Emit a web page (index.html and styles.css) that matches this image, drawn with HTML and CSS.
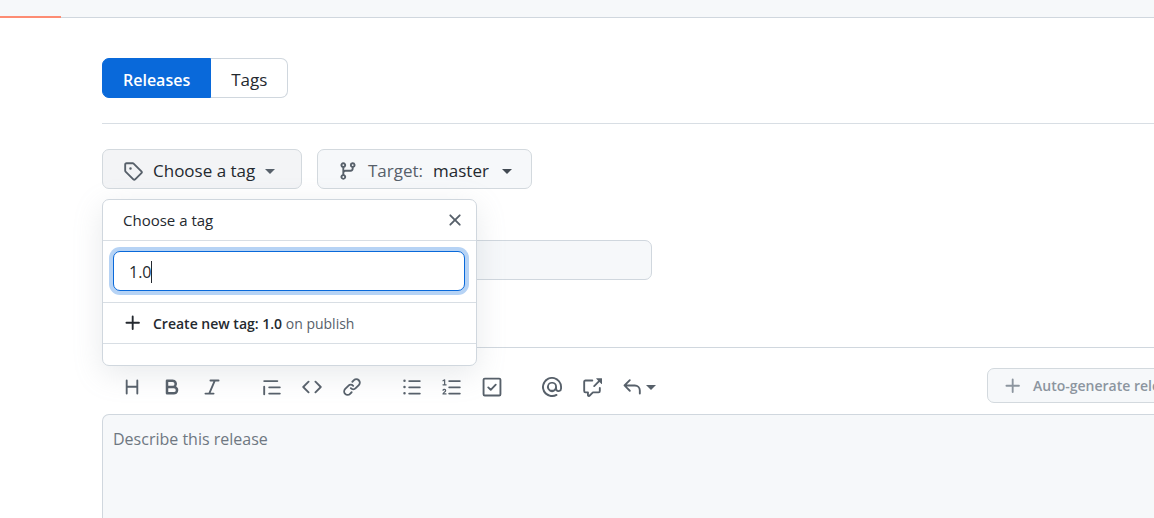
FILE: index.html
```html
<!DOCTYPE html>
<html lang="en">
<head>
<meta charset="utf-8">
<meta name="viewport" content="width=device-width, initial-scale=1">
<title>New release</title>
<link rel="stylesheet" href="styles.css">
</head>
<body>
<header class="topbar"><span class="topbar-active"></span></header>
<main class="page">
  <nav class="tabs" aria-label="Releases and tags">
    <a class="tab tab-selected" href="#releases" aria-current="page">Releases</a>
    <a class="tab" href="#tags">Tags</a>
  </nav>
  <form class="release">
    <div class="pickers">
      <div class="picker">
        <button class="btn btn-open" type="button" aria-expanded="true">
          <svg class="icon" viewBox="0 0 16 16"><path d="M1 7.775V2.75C1 1.784 1.784 1 2.75 1h5.025c.464 0 .91.184 1.238.513l6.25 6.25a1.75 1.75 0 0 1 0 2.474l-5.026 5.026a1.75 1.75 0 0 1-2.474 0l-6.25-6.25A1.752 1.752 0 0 1 1 7.775Zm1.5 0c0 .066.026.13.073.177l6.25 6.25a.25.25 0 0 0 .354 0l5.025-5.025a.25.25 0 0 0 0-.354l-6.25-6.25a.25.25 0 0 0-.177-.073H2.75a.25.25 0 0 0-.25.25ZM6 5a1 1 0 1 1 0 2 1 1 0 0 1 0-2Z"/></svg>
          <span>Choose a tag</span><span class="caret"></span>
        </button>
        <section class="menu" aria-label="Choose a tag">
          <div class="menu-head">
            <span>Choose a tag</span>
            <button class="close" type="button" aria-label="Close"><svg class="icon" viewBox="0 0 16 16"><path d="M3.72 3.72a.75.75 0 0 1 1.06 0L8 6.94l3.22-3.22a.749.749 0 0 1 1.275.326.749.749 0 0 1-.215.734L9.06 8l3.22 3.22a.749.749 0 0 1-.326 1.275.749.749 0 0 1-.734-.215L8 9.06l-3.22 3.22a.751.751 0 0 1-1.042-.018.751.751 0 0 1-.018-1.042L6.94 8 3.72 4.78a.75.75 0 0 1 0-1.06Z"/></svg></button>
          </div>
          <div class="menu-search">
            <input class="search" type="text" value="1.0" aria-label="Find or create a new tag">
            <span class="cursor"></span>
          </div>
          <button class="menu-item" type="button">
            <svg class="icon" viewBox="0 0 16 16"><path d="M7.75 2a.75.75 0 0 1 .75.75V7h4.25a.75.75 0 0 1 0 1.5H8.5v4.25a.75.75 0 0 1-1.5 0V8.5H2.75a.75.75 0 0 1 0-1.5H7V2.75A.75.75 0 0 1 7.75 2Z"/></svg>
            <span><b>Create new tag: 1.0</b> on publish</span>
          </button>
          <div class="menu-foot"></div>
        </section>
      </div>
      <button class="btn btn-target" type="button">
        <svg class="icon" viewBox="0 0 16 16"><path d="M9.5 3.25a2.25 2.25 0 1 1 3 2.122V6A2.5 2.5 0 0 1 10 8.5H6a1 1 0 0 0-1 1v1.128a2.251 2.251 0 1 1-1.5 0V5.372a2.25 2.25 0 1 1 1.5 0v1.836A2.493 2.493 0 0 1 6 7h4a1 1 0 0 0 1-1v-.628A2.25 2.25 0 0 1 9.5 3.25Zm-6 0a.75.75 0 1 0 1.5 0 .75.75 0 0 0-1.5 0Zm8.25-.75a.75.75 0 1 0 0 1.5.75.75 0 0 0 0-1.5ZM4.25 12a.75.75 0 1 0 0 1.5.75.75 0 0 0 0-1.5Z"/></svg>
        <span class="muted">Target:</span><span>master</span><span class="caret"></span>
      </button>
    </div>
    <input class="title" type="text" aria-label="Release title">
    <div class="editor">
      <div class="tools">
        <div class="group">
          <button class="tool" type="button" aria-label="Heading"><svg class="icon" viewBox="0 0 16 16"><path d="M3.75 2a.75.75 0 0 1 .75.75V7h7V2.75a.75.75 0 0 1 1.5 0v10.5a.75.75 0 0 1-1.5 0V8.5h-7v4.75a.75.75 0 0 1-1.5 0V2.75A.75.75 0 0 1 3.75 2Z"/></svg></button>
          <button class="tool" type="button" aria-label="Bold"><svg class="icon" viewBox="0 0 16 16"><path d="M4 2h4.5a3.501 3.501 0 0 1 2.852 5.53A3.499 3.499 0 0 1 9.5 14H4a1 1 0 0 1-1-1V3a1 1 0 0 1 1-1Zm1 7v3h4.5a1.5 1.5 0 0 0 0-3Zm3.5-2a1.5 1.5 0 0 0 0-3H5v3Z"/></svg></button>
          <button class="tool" type="button" aria-label="Italic"><svg class="icon" viewBox="0 0 16 16"><path d="M6 2.75A.75.75 0 0 1 6.75 2h6.5a.75.75 0 0 1 0 1.5h-2.505l-3.858 9H9.25a.75.75 0 0 1 0 1.5h-6.5a.75.75 0 0 1 0-1.5h2.505l3.858-9H6.75A.75.75 0 0 1 6 2.75Z"/></svg></button>
        </div>
        <div class="group">
          <button class="tool" type="button" aria-label="Quote"><svg class="icon" viewBox="0 0 16 16"><path d="M1.75 2.5h10.5a.75.75 0 0 1 0 1.5H1.75a.75.75 0 0 1 0-1.5Zm4 5h8.5a.75.75 0 0 1 0 1.5h-8.5a.75.75 0 0 1 0-1.5Zm0 5h8.5a.75.75 0 0 1 0 1.5h-8.5a.75.75 0 0 1 0-1.5ZM2.5 7.75v6a.75.75 0 0 1-1.5 0v-6a.75.75 0 0 1 1.5 0Z"/></svg></button>
          <button class="tool" type="button" aria-label="Code"><svg class="icon" viewBox="0 0 16 16"><path d="m11.28 3.22 4.25 4.25a.75.75 0 0 1 0 1.06l-4.25 4.25a.749.749 0 0 1-1.275-.326.749.749 0 0 1 .215-.734L13.94 8l-3.72-3.72a.749.749 0 0 1 .326-1.275.749.749 0 0 1 .734.215Zm-6.56 0a.751.751 0 0 1 1.042.018.751.751 0 0 1 .018 1.042L2.06 8l3.72 3.72a.749.749 0 0 1-.326 1.275.749.749 0 0 1-.734-.215L.47 8.53a.75.75 0 0 1 0-1.06Z"/></svg></button>
          <button class="tool" type="button" aria-label="Link"><svg class="icon" viewBox="0 0 16 16"><path d="m7.775 3.275 1.25-1.25a3.5 3.5 0 1 1 4.95 4.95l-2.5 2.5a3.5 3.5 0 0 1-4.95 0 .751.751 0 0 1 .018-1.042.751.751 0 0 1 1.042-.018 1.998 1.998 0 0 0 2.83 0l2.5-2.5a2.002 2.002 0 0 0-2.83-2.83l-1.25 1.25a.751.751 0 0 1-1.042-.018.751.751 0 0 1-.018-1.042Zm-4.69 9.64a1.998 1.998 0 0 0 2.83 0l1.25-1.25a.751.751 0 0 1 1.042.018.751.751 0 0 1 .018 1.042l-1.25 1.25a3.5 3.5 0 1 1-4.95-4.95l2.5-2.5a3.5 3.5 0 0 1 4.95 0 .751.751 0 0 1-.018 1.042.751.751 0 0 1-1.042.018 1.998 1.998 0 0 0-2.83 0l-2.5 2.5a1.998 1.998 0 0 0 0 2.83Z"/></svg></button>
        </div>
        <div class="group">
          <button class="tool" type="button" aria-label="Bulleted list"><svg class="icon" viewBox="0 0 16 16"><path d="M5.75 2.5h8.5a.75.75 0 0 1 0 1.5h-8.5a.75.75 0 0 1 0-1.5Zm0 5h8.5a.75.75 0 0 1 0 1.5h-8.5a.75.75 0 0 1 0-1.5Zm0 5h8.5a.75.75 0 0 1 0 1.5h-8.5a.75.75 0 0 1 0-1.5ZM2 14a1 1 0 1 1 0-2 1 1 0 0 1 0 2Zm1-6a1 1 0 1 1-2 0 1 1 0 0 1 2 0ZM2 4a1 1 0 1 1 0-2 1 1 0 0 1 0 2Z"/></svg></button>
          <button class="tool" type="button" aria-label="Numbered list"><svg class="icon" viewBox="0 0 16 16"><path d="M5.75 2.5h8.5a.75.75 0 0 1 0 1.5h-8.5a.75.75 0 0 1 0-1.5Zm0 5h8.5a.75.75 0 0 1 0 1.5h-8.5a.75.75 0 0 1 0-1.5Zm0 5h8.5a.75.75 0 0 1 0 1.5h-8.5a.75.75 0 0 1 0-1.5Z"/><path class="line-thin" d="M.8 3 2.1 2.3V6M.8 6.2h2.5M.8 10.6c.3-1.1 2.2-.9 2.1.3-.1.9-1.6 1.4-2.1 2.6h2.4"/></svg></button>
          <button class="tool" type="button" aria-label="Task list"><svg class="icon" viewBox="0 0 16 16"><path class="line" d="M2.25 1.25h11.5q1 0 1 1v11.5q0 1-1 1H2.25q-1 0-1-1V2.25q0-1 1-1ZM5 8.3l2 2 4-4.2"/></svg></button>
        </div>
        <div class="group">
          <button class="tool" type="button" aria-label="Mention"><svg class="icon" viewBox="0 0 16 16"><path d="M4.75 2.37a6.501 6.501 0 0 0 6.5 11.26.75.75 0 0 1 .75 1.298A7.999 7.999 0 0 1 .989 4.148 8 8 0 0 1 16 7.75v1.5a2.75 2.75 0 0 1-5.072 1.475 3.999 3.999 0 0 1-6.65-4.19A4 4 0 0 1 12 7.75v1.5a1.25 1.25 0 0 0 2.5 0V7.867a6.5 6.5 0 0 0-9.75-5.496V2.37ZM10.5 7.75a2.5 2.5 0 1 0-5 0 2.5 2.5 0 0 0 5 0Z"/></svg></button>
          <button class="tool" type="button" aria-label="Reference"><svg class="icon" viewBox="0 0 16 16"><path d="M2.75 3.5a.25.25 0 0 0-.25.25v7.5c0 .138.112.25.25.25h2a.75.75 0 0 1 .75.75v2.19l2.72-2.72a.749.749 0 0 1 .53-.22h4.5a.25.25 0 0 0 .25-.25v-2.5a.75.75 0 0 1 1.5 0v2.5A1.75 1.75 0 0 1 13.25 13H9.06l-2.573 2.573A1.458 1.458 0 0 1 4 14.543V13H2.75A1.75 1.75 0 0 1 1 11.25v-7.5C1 2.784 1.784 2 2.75 2h5.5a.75.75 0 0 1 0 1.5ZM16 1.25v4.146a.25.25 0 0 1-.427.177L14.03 4.03l-3.75 3.75a.749.749 0 0 1-1.275-.326.749.749 0 0 1 .215-.734l3.75-3.75-1.543-1.543A.25.25 0 0 1 11.604 1h4.146a.25.25 0 0 1 .25.25Z"/></svg></button>
          <button class="tool" type="button" aria-label="Saved replies"><svg class="icon" viewBox="0 0 16 16"><path d="M6.78 1.97a.75.75 0 0 1 0 1.06L3.81 6h6.44A4.75 4.75 0 0 1 15 10.75v2.5a.75.75 0 0 1-1.5 0v-2.5a3.25 3.25 0 0 0-3.25-3.25H3.81l2.97 2.97a.749.749 0 0 1-.326 1.275.749.749 0 0 1-.734-.215L1.47 7.28a.75.75 0 0 1 0-1.06l4.25-4.25a.75.75 0 0 1 1.06 0Z"/></svg><span class="caret"></span></button>
        </div>
        <button class="btn btn-small" type="button" disabled>
          <svg class="icon" viewBox="0 0 16 16"><path d="M7.75 2a.75.75 0 0 1 .75.75V7h4.25a.75.75 0 0 1 0 1.5H8.5v4.25a.75.75 0 0 1-1.5 0V8.5H2.75a.75.75 0 0 1 0-1.5H7V2.75A.75.75 0 0 1 7.75 2Z"/></svg>
          <span>Auto-generate release notes</span>
        </button>
      </div>
      <textarea class="notes" placeholder="Describe this release" aria-label="Describe this release"></textarea>
    </div>
  </form>
</main>
</body>
</html>
```
FILE: styles.css
```css
* { box-sizing: border-box; }
body {
  margin: 0;
  min-height: 100vh;
  display: flex;
  flex-direction: column;
  overflow: hidden;
  background: #fff;
  color: #24292f;
  font-family: "Open Sans", "Noto Sans", sans-serif;
  font-size: 16px;
}
button, input, textarea { font: inherit; color: inherit; }
button { cursor: pointer; }
.topbar {
  height: 18px;
  display: flex;
  align-items: flex-end;
  background: linear-gradient(#d0d7de, #d0d7de) bottom / 100% 1px no-repeat #f6f8fa;
}
.topbar-active { width: 61px; height: 2px; background: #fd8c73; }
.page { flex: 1; display: flex; flex-direction: column; padding: 40px 0 0 102px; }
.tabs { display: flex; padding-bottom: 25px; border-bottom: 1px solid #d8dee4; }
.tab {
  height: 40px;
  padding: 3px 20px 0;
  display: flex;
  align-items: center;
  border: 1px solid #d0d7de;
  border-left: 0;
  border-radius: 0 7px 7px 0;
  color: #24292f;
  font-size: 17px;
  font-weight: 500;
  text-decoration: none;
}
.tab-selected {
  background: #0969da;
  border: 1px solid #0969da;
  border-radius: 7px 0 0 7px;
  color: #fff;
  font-size: 16px;
  font-weight: 600;
}
.release { flex: 1; display: flex; flex-direction: column; padding-top: 25px; }
.pickers { display: flex; gap: 15px; }
.picker { position: relative; }
.icon { width: 20px; height: 20px; flex: none; fill: currentColor; }
.line, .line-thin { fill: none; stroke: currentColor; stroke-width: 1.5; stroke-linecap: round; stroke-linejoin: round; }
.line-thin { stroke-width: 1; }
.caret { flex: none; margin-top: 2px; border: 5px solid transparent; border-top-color: currentColor; border-bottom: 0; }
.btn {
  height: 40px;
  padding: 3px 20px 0;
  display: flex;
  align-items: center;
  gap: 10px;
  border: 1px solid #d3d9de;
  border-radius: 7px;
  background: #f6f8fa;
  font-size: 17px;
  font-weight: 500;
  white-space: nowrap;
}
.btn .icon, .btn .caret { color: #57606a; }
.btn-open { width: 200px; background: #f3f4f6; }
.btn-target { width: 215px; }
.btn-target .caret { margin-left: 3px; color: #424a53; }
.muted { color: #57606a; }
.menu {
  position: absolute;
  top: 50px;
  left: 0;
  z-index: 2;
  width: 375px;
  border: 1px solid #d0d7de;
  border-radius: 7px;
  background: #fff;
  box-shadow: 0 8px 30px rgba(140, 149, 159, 0.2);
  font-size: 14px;
}
.menu-head {
  height: 41px;
  padding: 0 11px 0 20px;
  display: flex;
  align-items: center;
  justify-content: space-between;
  border-bottom: 1px solid #d8dee4;
  font-size: 15px;
}
.close { display: flex; padding: 0; border: 0; background: none; color: #57606a; }
.menu-search { position: relative; padding: 10px 11px 11px 10px; border-bottom: 1px solid #d8dee4; }
.search {
  display: block;
  width: 100%;
  height: 40px;
  padding: 2px 15px 0;
  border: 1px solid #0969da;
  border-radius: 7px;
  outline: 0;
  background: #fff;
  box-shadow: 0 0 0 4px #b6d3f5;
  font-size: 16px;
}
.cursor { position: absolute; left: 48px; top: 20px; width: 1px; height: 22px; background: #24292f; }
.menu-item {
  width: 100%;
  height: 41px;
  padding: 0 20px;
  display: flex;
  align-items: center;
  gap: 10px;
  border: 0;
  border-bottom: 1px solid #d8dee4;
  background: none;
  color: #57606a;
}
.menu-item b, .menu-item .icon { color: #24292f; font-weight: 600; }
.menu-foot { height: 21px; }
.title {
  width: 550px;
  height: 40px;
  margin-top: 51px;
  border: 1px solid #d0d7de;
  border-radius: 7px;
  background: #f6f8fa;
}
.editor { flex: 1; display: flex; flex-direction: column; margin-top: 67px; border-top: 1px solid #d0d7de; }
.tools { display: flex; gap: 20px; padding: 20px 0 11px 10px; }
.group { display: flex; }
.tool {
  width: 40px;
  height: 35px;
  padding: 2px 0 0 10px;
  display: flex;
  align-items: center;
  border: 0;
  background: none;
  color: #57606a;
}
.tool .caret { margin-left: 4px; }
.btn-small {
  width: 260px;
  height: 35px;
  margin: 0 -93px 0 auto;
  padding: 0 15px;
  color: #8c959f;
  font-size: 14px;
  font-weight: 600;
}
.btn-small .icon { color: #8c959f; }
.notes {
  flex: 1;
  width: calc(100% + 10px);
  min-height: 104px;
  padding: 13px 10px;
  border: 1px solid #d0d7de;
  border-radius: 7px 7px 0 0;
  border-bottom: 0;
  outline: 0;
  resize: none;
  background: #f6f8fa;
}
.notes::placeholder { color: #6e7781; opacity: 1; }
```
